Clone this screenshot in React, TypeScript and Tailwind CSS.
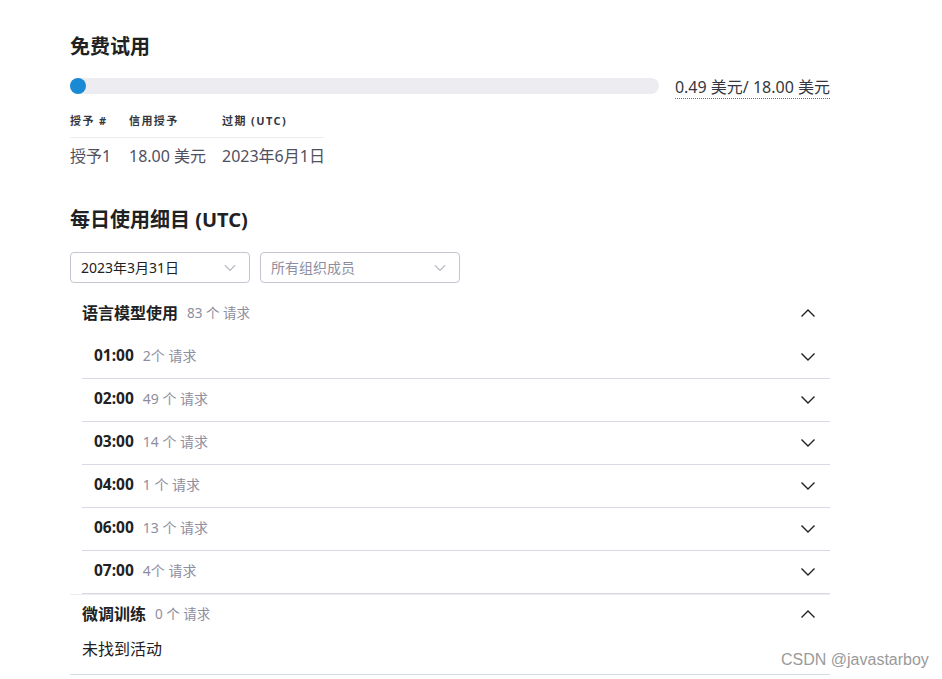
import React from "react";

const font = { fontFamily: '"Noto Sans", "Noto Sans CJK SC", sans-serif' };

function Chevron({ up = false, className = "" }: { up?: boolean; className?: string }) {
  return (
    <svg width="16" height="10" viewBox="0 0 16 10" className={className} fill="none">
      {up ? (
        <path d="M1.5 8.5 L8 2 L14.5 8.5" stroke="currentColor" strokeWidth="1.4" />
      ) : (
        <path d="M1.5 1.5 L8 8 L14.5 1.5" stroke="currentColor" strokeWidth="1.4" />
      )}
    </svg>
  );
}

const rows = [
  { t: "01:00", n: "2个 请求" },
  { t: "02:00", n: "49 个 请求" },
  { t: "03:00", n: "14 个 请求" },
  { t: "04:00", n: "1 个 请求" },
  { t: "06:00", n: "13 个 请求" },
  { t: "07:00", n: "4个 请求" },
];

export default function App() {
  return (
    <div className="relative w-[942px] h-[679px] bg-white overflow-hidden text-[#353740]" style={font}>
      <div className="ml-[70px] w-[760px] pt-[33px]">
        <h2 className="text-[20px] leading-[28px] font-bold text-[#202123]">免费试用</h2>

        <div className="mt-[13px] flex items-center h-[24px]">
          <div className="relative w-[590px] h-[16px] rounded-full bg-[#ececf1]">
            <div className="absolute left-0 top-0 w-[16px] h-[16px] rounded-full bg-[#1a8ad4]" />
          </div>
          <div className="ml-[16px] mt-[4px] text-[16px] text-[#353740] border-b border-dotted border-[#6e6e80] leading-[21px] whitespace-nowrap">
            0.49 美元/ 18.00 美元
          </div>
        </div>

        <div className="mt-[12px] w-[254px]">
          <div className="grid grid-cols-[59px_93px_102px] border-b border-[#ececf1] pb-[5px] text-[11px] leading-[22px] font-bold tracking-[1.4px] text-[#353740] whitespace-nowrap">
            <div>授予 #</div>
            <div>信用授予</div>
            <div>过期 (UTC)</div>
          </div>
          <div className="grid grid-cols-[59px_93px_102px] pt-[6px] text-[16px] leading-[24px] text-[#505060] whitespace-nowrap">
            <div>授予1</div>
            <div>18.00 美元</div>
            <div>2023年6月1日</div>
          </div>
        </div>

        <h2 className="mt-[38px] text-[20px] leading-[28px] font-bold text-[#202123]">每日使用细目 (UTC)</h2>

        <div className="mt-[18px] flex gap-[10px]">
          <div className="w-[180px] h-[31px] border border-[#c5c5d2] rounded-[4px] flex items-center justify-between pl-[10px] pr-[12px] text-[14px] text-[#202123]">
            <span>2023年3月31日</span>
            <Chevron className="text-[#b4b4c4] w-[14px] h-[8px]" />
          </div>
          <div className="w-[200px] h-[31px] border border-[#c5c5d2] rounded-[4px] flex items-center justify-between pl-[10px] pr-[12px] text-[14px] text-[#8e8ea0]">
            <span>所有组织成员</span>
            <Chevron className="text-[#b4b4c4] w-[14px] h-[8px]" />
          </div>
        </div>

        <div className="mt-[18px] border-b border-[#ececf1]">
          <div className="flex items-center justify-between pl-[12px] pr-[14px] h-[24px]">
            <div className="flex items-center gap-[9px]">
              <span className="text-[16px] font-bold text-[#202123]">语言模型使用</span>
              <span className="text-[13.5px] text-[#8e8ea0]">83 个 请求</span>
            </div>
            <Chevron up className="text-[#202123] w-[16px] h-[10px]" />
          </div>
          <div className="ml-[12px] pt-[11px]">
            {rows.map((r) => (
              <div key={r.t} className="flex items-center justify-between pl-[12px] pr-[14px] pt-[7px] pb-[11px] border-b border-[#d9d9e3]">
                <div className="flex gap-[9px] h-[24px] items-center">
                  <span className="text-[15.5px] font-bold text-[#202123] mt-[1px]">{r.t}</span>
                  <span className="text-[14px] text-[#8e8ea0]">{r.n}</span>
                </div>
                <Chevron className="text-[#202123] w-[16px] h-[10px] mt-[4px]" />
              </div>
            ))}
          </div>
        </div>

        <div className="pt-[7px] border-b border-[#d9d9e3]">
          <div className="flex items-center justify-between pl-[12px] pr-[14px] h-[24px]">
            <div className="flex items-center gap-[9px]">
              <span className="text-[16px] font-bold text-[#202123]">微调训练</span>
              <span className="text-[13.5px] text-[#8e8ea0]">0 个 请求</span>
            </div>
            <Chevron up className="text-[#202123] w-[16px] h-[10px]" />
          </div>
          <div className="pl-[12px] pt-[11px] pb-[13px] text-[16px] leading-[24px] text-[#202123]">未找到活动</div>
        </div>
      </div>

      <div
        className="absolute left-[781px] top-[650px] text-[16px] leading-[20px] text-[#9a9a9a] whitespace-nowrap"
        style={{ fontFamily: '"Liberation Sans", Arial, sans-serif' }}
      >
        CSDN @javastarboy
      </div>
    </div>
  );
}
